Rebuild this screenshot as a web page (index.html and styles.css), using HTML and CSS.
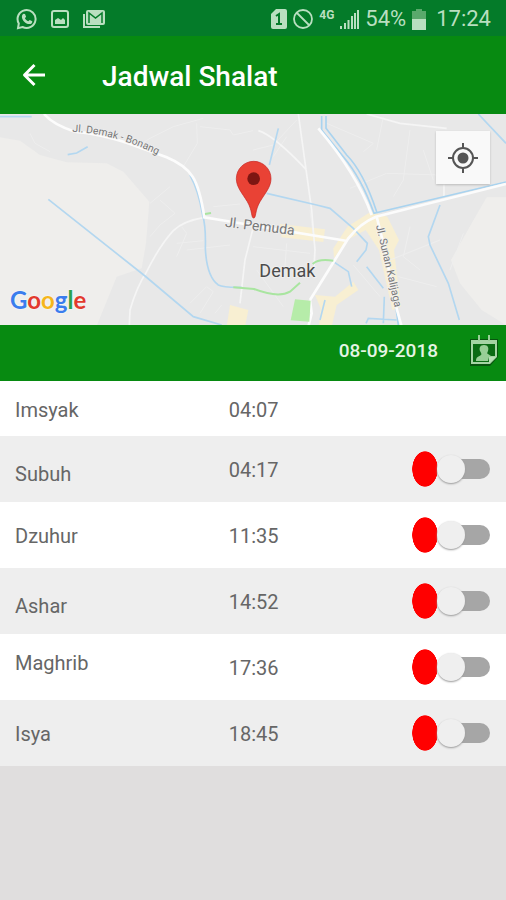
FILE: index.html
```html
<!DOCTYPE html>
<html lang="id">
<head>
<meta charset="utf-8">
<meta name="viewport" content="width=device-width, initial-scale=1">
<title>Jadwal Shalat</title>
<link rel="stylesheet" href="styles.css">
</head>
<body>
<div class="status">
  <div class="status-group status-notices">
    <svg width="22" height="22" viewBox="0 0 22 22" fill="none" stroke="currentColor" stroke-width="2"><path d="M2.8 15.5A9 9 0 1 1 6.5 19L2 20.2z"/><path fill="currentColor" stroke="none" d="M7.500 5.800 9 6l1.100 2.700-1.200 1.500c.8 1.500 1.800 2.400 3.400 3.100l1.400-1.400 2.600 1.300c.1 1.900-1.300 3-3 2.900-3.700-.3-7.200-3.700-7.400-7.200 0-1.300.6-2.600 1.600-3.100z"/></svg>
    <svg width="18" height="20" viewBox="0 0 18 20"><rect x="1" y="2" width="16" height="16" rx="2" fill="none" stroke="currentColor" stroke-width="2"/><path fill="currentColor" d="M4 15v-4l3-2 3 2 2-2 2 2v4z"/></svg>
    <svg width="24" height="20" viewBox="0 0 24 20"><path d="M2 5v13h16" fill="none" stroke="currentColor" stroke-width="2"/><rect x="4" y="1" width="19" height="15" rx="2" fill="currentColor"/><path d="M7 14V4l6.500 5L20 4v10" fill="none" stroke="#047b29" stroke-width="1.500"/></svg>
  </div>
  <div class="status-group">
    <svg width="16" height="20" viewBox="0 0 16 20"><path fill="currentColor" d="M5 0h9a2 2 0 0 1 2 2v16a2 2 0 0 1-2 2H2a2 2 0 0 1-2-2V5z"/><path d="m5 7 3-2v10M5 15h6" fill="none" stroke="#047b29" stroke-width="2"/></svg>
    <svg width="20" height="20" viewBox="0 0 20 20" fill="none" stroke="currentColor" stroke-width="1.800"><circle cx="10" cy="10" r="9"/><path d="m3.500 3.500 13 13"/></svg>
    <span class="network">4G</span>
    <svg width="19" height="20" viewBox="0 0 19 20" fill="currentColor"><path d="M0 17h2v3H0zM4 14h2v6H4zM7.500 11h2v9h-2zM11 7h2v13h-2zM14 4h2v16h-2zM17 1h2v19h-2z"/></svg>
    <span>54%</span>
    <svg class="battery" width="14" height="22" viewBox="0 0 14 22"><path d="M4 1h6v2h4v8H0V3h4z" fill="#59a96c"/><path d="M0 11h14v11H0z" fill="currentColor"/></svg>
    <span>17:24</span>
  </div>
</div>
<header class="appbar">
  <button class="icon-button" type="button" aria-label="Kembali">
    <svg width="24" height="24" viewBox="0 0 24 24" fill="none" stroke="currentColor" stroke-width="3" stroke-linejoin="round"><path d="M23 12H3M12.500 2 2.500 12l10 10"/></svg>
  </button>
  <h1>Jadwal Shalat</h1>
</header>
<main>
  <section class="map" aria-label="Peta Demak">
    <svg class="map-canvas" viewBox="0 12 1518 633" preserveAspectRatio="xMidYMid slice">
      <path fill="#e8e8e8" d="M0 0h1518v660H0z"/>
      <path fill="#efeeec" d="M0 82 60 92 120 135 200 157 320 160 370 185 400 220 448 275 438 400 425 475 350 500 285 660H0zM1518 262H1460L1415 340 1353 450 1380 520 1445 600 1518 645z"/>
      <g fill="#f8efd2"><path d="M690 585 745 600 735 650H680zM840 342 975 358 970 396 845 382z"/><path d="m1000 415 42-65 70-45 50 15 35 70-15 30 20 170-25 10-40-180-40-60-55 30-40 55zM945 555l60 5 55-45 15 25-65 45-15 65h-38l5-55z"/></g>
      <g class="lanes">
        <path d="M90 70 105 100 150 125M410 110 450 85 520 50 610 25M590 40 592 100 550 170M600 50 690 60 700 75 759 62M450 280 510 230M480 270 525 310 480 345 450 380M530 440 560 370 545 350M560 420 690 405M530 400 610 392M640 290 720 282M570 580 620 530 640 545 600 610M645 610l20-25"/>
        <path d="M759 120 820 105 890 30M820 140 860 80M980 40 1120 100 1090 125M1150 20 1130 120M1230 60 1210 210 1180 260M1050 235 1160 190 1320 195M1270 120 1300 210M1230 350 1210 440 1260 480M1170 450 1320 390M930 300 945 420M860 400 855 470M759 410 930 430M770 480 850 590M930 570 1010 440M1060 465 1140 560M1195 500 1310 530M1390 370 1350 480"/>
      </g>
      <g class="roads">
        <path d="M388 645 390 600Q410 530 440 485Q480 405 520 362Q550 332 615 322M759 355 735 450 720 580M775 62Q820 75 918 178L935 300 945 420 942 470M895 12 918 178M1100 12 1200 40 1340 55M1332 200V260"/>
      </g>
      <g class="water">
        <path d="m145 268 290 230 145 122 85 25"/>
        <path d="M570 195Q595 240 608 315Q618 350 616 415Q620 500 655 525Q670 533 725 532M203 134l27-5 33-19M0 20h95"/>
        <path d="m835 55-27 110M800 250 950 285 990 295 1060 355 1102 400 1098 420 1070 455M1000 455 1045 485 1055 530M975 570 960 630M1320 285 1285 380 1290 405 1345 520 1378 630M1435 12 1518 100M1150 640 1153 560M1098 640 1105 625 1190 630M1100 470l50 65"/>
      </g>
      <g class="river"><path d="M965 18V60L1030 140Q1085 205 1122 310L1518 216M978 18V55L1040 135Q1090 185 1130 305"/><path d="m1185 570 10 75"/></g>
      <g class="highway">
        <path d="M132 12Q160 45 225 65Q300 72 380 98L500 142Q555 165 578 200Q600 235 613 322L680 333 1042 393M1518 222 1128 320Q1080 340 1045 385L930 570M955 55Q1070 190 1115 315M1130 320 1160 440 1180 560 1205 650M930 570 935 610 925 650"/>
      </g>
      <path d="M700 532 762 537Q835 565 870 545L900 518M938 462Q955 445 1000 452M615 312l18-3" fill="none" stroke="#a9e5a0" stroke-width="6"/>
      <path d="M885 568 932 572 928 635 872 631z" fill="#b6eca9"/>
      <path id="bonang" d="M217 65Q350 72 477 137" fill="none"/>
      <g class="road-label">
        <text font-size="31"><textPath href="#bonang">Jl. Demak - Bonang</textPath></text>
        <text transform="translate(674 350) rotate(7)" font-size="42">Jl. Pemuda</text>
        <text transform="translate(1128 347) rotate(77)" font-size="32">Jl. Sunan Kalijaga</text>
      </g>
      <text class="town-label" x="778" y="500">Demak</text>
      <path fill="#e94235" stroke="#c5221f" stroke-width="2" d="M761 324C753 324 758 302 742 275C727 250 709 231 709 206A52 52 0 0 1 813 206C813 231 795 250 780 275C764 302 769 324 761 324z"/>
      <circle cx="761" cy="206" r="19" fill="#7d1612"/>
    </svg>
    <span class="google"><span class="blue">G</span><span class="red">o</span><span class="yellow">o</span><span class="blue">g</span><span class="green">l</span><span class="red">e</span></span>
    <button class="locate" type="button" aria-label="Lokasi saya">
      <svg width="30" height="30" viewBox="0 0 30 30" fill="none" stroke="#555" stroke-width="2"><circle cx="15" cy="15" r="10"/><circle cx="15" cy="15" r="5.500" fill="#555" stroke="none"/><path d="M15 0v5M15 25v5M0 15h5M25 15h5"/></svg>
    </button>
  </section>
  <div class="datebar">
    <time datetime="2018-09-08">08-09-2018</time>
    <button class="icon-button" type="button" aria-label="Pilih tanggal">
      <svg width="28" height="32" viewBox="0 0 28 32"><path d="M0 5h28v18l-8 9H0z" fill="#08550f"/><path d="M1 6h26v17l-7 7H1z" fill="#a5d4a4"/><path d="M3 10h22v12h-6v6H3z" fill="#0b6b14"/><path d="M14 11c4 0 5 3 4 6-1 2-1 3 0 3l3 2v1h-2l-1 4H6c0-4 2-4 5-6 1-1 0-2-1-4-1-3 0-6 4-6z" fill="#98cf96"/><path d="M19 29v-6h7z" fill="#b9e0b7"/><path d="M9 1v6M19 1v6" stroke="#98cf96" stroke-width="2"/></svg>
    </button>
  </div>
  <table class="schedule">
    <tbody>
      <tr><th scope="row">Imsyak</th><td>04:07</td><td></td></tr>
      <tr><th scope="row" class="low" id="subuh">Subuh</th><td>04:17</td><td class="alarm"><input type="checkbox" role="switch" aria-labelledby="subuh"></td></tr>
      <tr><th scope="row" id="dzuhur">Dzuhur</th><td>11:35</td><td class="alarm"><input type="checkbox" role="switch" aria-labelledby="dzuhur"></td></tr>
      <tr><th scope="row" class="low" id="ashar">Ashar</th><td>14:52</td><td class="alarm"><input type="checkbox" role="switch" aria-labelledby="ashar"></td></tr>
      <tr><th scope="row" class="high" id="maghrib">Maghrib</th><td>17:36</td><td class="alarm"><input type="checkbox" role="switch" aria-labelledby="maghrib"></td></tr>
      <tr><th scope="row" id="isya">Isya</th><td>18:45</td><td class="alarm"><input type="checkbox" role="switch" aria-labelledby="isya"></td></tr>
    </tbody>
  </table>
</main>
</body>
</html>
```
FILE: styles.css
```css
* { box-sizing: border-box; }

body {
  margin: 0;
  background: #e0dede;
  color: #666;
  font-family: Roboto, "Liberation Sans", sans-serif;
  font-size: 20px;
  line-height: 24px;
}

svg { display: block; flex: none; }

.status {
  display: flex;
  justify-content: space-between;
  align-items: center;
  height: 36px;
  padding: 2px 15px 0 16px;
  background: #047b29;
  color: #b9dfc0;
  font-size: 22px;
}

.status-group { display: flex; align-items: center; gap: 6px; }
.status-group.status-notices { gap: 13px; }
.battery { margin-right: 4px; }

.network {
  align-self: flex-start;
  font-size: 12px;
  font-weight: 700;
  line-height: 16px;
}

.appbar {
  display: flex;
  align-items: center;
  gap: 56px;
  height: 78px;
  padding: 0 22px;
  background: #078a11;
  color: #fff;
}

.appbar h1 {
  margin: 0;
  padding-top: 4px;
  font-size: 28px;
  font-weight: 500;
  line-height: 32px;
}

.icon-button {
  padding: 0;
  border: 0;
  background: none;
  color: inherit;
}

.map { position: relative; }
.map-canvas { width: 100%; height: 211px; }

.lanes, .roads, .water, .river, .highway { fill: none; }
.lanes { stroke: #eee; stroke-width: 3; }
.roads { stroke: #f5f5f5; stroke-width: 5; }
.water { stroke: #b3d7f0; stroke-width: 5; }
.river { stroke: #a9d3ef; stroke-width: 5; }
.highway { stroke: #fcfcfc; stroke-width: 8; }

.road-label { fill: #777; stroke: #f0f0f0; stroke-width: 4; paint-order: stroke; }

.town-label {
  fill: #4c4c4c;
  stroke: #f0f0f0;
  stroke-width: 5;
  paint-order: stroke;
  font-size: 54px;
}

.google {
  position: absolute;
  left: 10px;
  bottom: 11px;
  font-family: Lato, sans-serif;
  font-size: 24px;
  font-weight: 700;
  line-height: 28px;
  text-shadow: 0 0 2px #fff;
}

.blue { color: #3b7ded; }
.red { color: #e23a2e; }
.yellow { color: #f5b61c; }
.green { color: #2ba24c; }

.locate {
  position: absolute;
  top: 17px;
  right: 16px;
  display: grid;
  place-items: center;
  width: 54px;
  height: 53px;
  padding: 0;
  border: 0;
  background: #f9f9f9;
  box-shadow: 0 1px 2px #bbb;
}

.datebar {
  display: flex;
  justify-content: flex-end;
  align-items: center;
  gap: 32px;
  height: 56px;
  padding: 0 8px 6px 14px;
  background: #078a11;
  color: #e5f5e4;
}

.datebar time { padding-top: 2px; font-weight: 500; font-size: 19px; }

.schedule {
  width: 100%;
  border-collapse: collapse;
  table-layout: fixed;
  background: #fff;
}

.schedule tr { height: 66px; }
.schedule tr:first-child { height: 55px; }
.schedule tr:nth-child(even) { background: #eee; }

.schedule th,
.schedule td {
  padding: 2px 0 0 1px;
  font-weight: 400;
  text-align: left;
}

.schedule th { width: 45%; padding-left: 15px; }
.schedule .low { padding-top: 10px; }
.schedule .high { padding: 0 0 8px 15px; }
.schedule .alarm { padding: 0 16px 0 0; }

.alarm input {
  position: relative;
  display: block;
  width: 78px;
  height: 36px;
  margin: 0 0 0 auto;
  appearance: none;
  background: radial-gradient(ellipse 13px 18px at 13px 50%, #f00 96%, transparent 100%);
}

.alarm input::before {
  content: "";
  position: absolute;
  inset: 8px 0 8px 38px;
  border-radius: 10px;
  background: #a6a6a6;
}

.alarm input::after {
  content: "";
  position: absolute;
  top: 4px;
  left: 25px;
  width: 28px;
  height: 28px;
  border-radius: 50%;
  background: #efefef;
  box-shadow: 0 1px 2px #999;
}
```
